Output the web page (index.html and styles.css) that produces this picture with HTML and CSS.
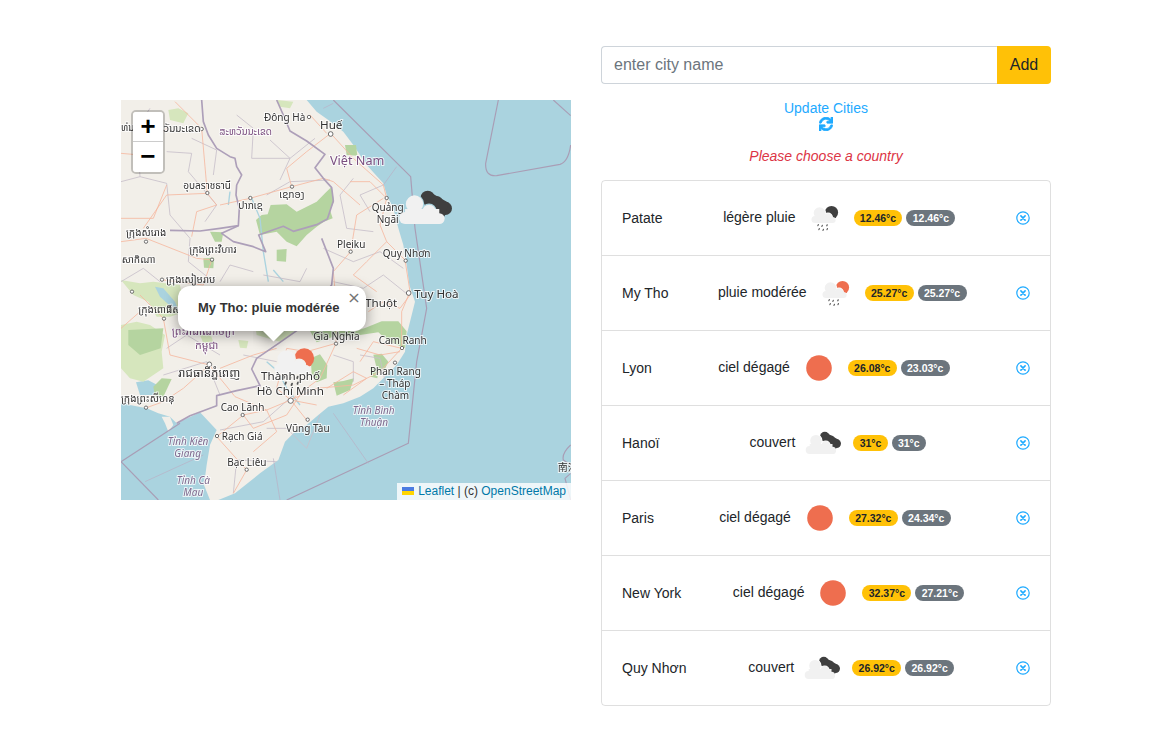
FILE: index.html
```html
<!DOCTYPE html>
<html lang="en">
<head>
	<meta charset="UTF-8">
	<title>Weather</title>
	<link rel="stylesheet" href="styles.css">
</head>
<body>

	<svg class="defs" width="0" height="0">
		<defs>
			<mask id="cutCloud" maskUnits="userSpaceOnUse" x="0" y="0" width="50" height="50">
				<rect width="50" height="50" fill="#fff"/>
				<g fill="#000" stroke="#000" stroke-width="1.4">
					<circle cx="17" cy="22.7" r="5.8"/><circle cx="26.7" cy="27.5" r="4.4"/>
				</g>
			</mask>
			<mask id="cutSmall" maskUnits="userSpaceOnUse" x="0" y="0" width="50" height="50">
				<rect width="50" height="50" fill="#fff"/>
				<g fill="#000" stroke="#000" stroke-width="1.4">
					<circle cx="19.5" cy="20" r="5.8"/><circle cx="28" cy="24.5" r="4.2"/>
				</g>
			</mask>
			<symbol id="clouds" viewBox="0 0 50 50">
				<g fill="#3f3f3f" mask="url(#cutCloud)">
					<circle cx="25.8" cy="18.6" r="4.8"/><circle cx="31.6" cy="22" r="4.6"/><circle cx="37.6" cy="25.6" r="4.4"/>
					<path d="M22 20l4-6 14 8-3 9-9-1z"/>
				</g>
				<g fill="#f1f1f1">
					<circle cx="17" cy="22.7" r="5.8"/><circle cx="26.7" cy="27.5" r="4.4"/>
					<circle cx="10.7" cy="32" r="4"/><circle cx="33.5" cy="32.4" r="3.6"/>
					<rect x="10.7" y="26" width="22.8" height="10"/>
				</g>
			</symbol>
			<g id="rainCloud">
				<g fill="#f1f1f1">
					<circle cx="19.5" cy="20" r="5.8"/><circle cx="28" cy="24.5" r="4.2"/>
					<circle cx="15" cy="26.5" r="3.5"/><circle cx="32.6" cy="27" r="3"/>
					<rect x="15" y="23" width="17.6" height="7"/>
				</g>
				<g stroke="#555" stroke-width="1.2" stroke-linecap="round">
					<path d="M18.3 31.6l-.4 1M22.3 32.4l-.4 1M27.2 31.8l-.4 1M19.3 35.6l-.4 1M23.4 36.4l-.4 1M27.4 35.6l-.4 1"/>
				</g>
			</g>
			<symbol id="rainDark" viewBox="0 0 50 50">
				<circle cx="31.5" cy="19.5" r="6.6" fill="#3f3f3f" mask="url(#cutSmall)"/>
				<use href="#rainCloud"/>
			</symbol>
			<symbol id="rainSun" viewBox="0 0 50 50">
				<circle cx="31.5" cy="19.5" r="6.6" fill="#ee6e4f" mask="url(#cutSmall)"/>
				<use href="#rainCloud"/>
			</symbol>
			<symbol id="sun" viewBox="0 0 50 50">
				<circle cx="25" cy="25" r="12.8" fill="#ee6e4f"/>
			</symbol>
			<symbol id="remove" viewBox="0 0 14 14">
				<circle cx="7" cy="7" r="6.2" fill="none" stroke="currentColor" stroke-width="1.2"/>
				<path d="M4.9 4.9l4.2 4.2M9.1 4.9l-4.2 4.2" stroke="currentColor" stroke-width="1.6" stroke-linecap="round"/>
			</symbol>
		</defs>
	</svg>

	<div class="page">

		<div class="map">
			<svg class="tiles" viewBox="3 15 1350 1200" width="450" height="400">
				<rect x="3" y="15" width="1350" height="1200" fill="#aad3df"/>

				<!-- land -->
				<path fill="#f2efe9" d="M3 15L560 15 590 50 625 75 670 110 700 150 740 210 790 265 800 300 820 340 835 400 850 450 860 510 868 570 885 620 870 680 860 720 855 770 830 810 790 850 760 880 720 905 670 925 625 935 595 960 560 990 530 1005 495 1040 475 1095 420 1135 345 1195 295 1215 270 1215 252 1170 260 1110 270 1050 290 1005 240 952 170 985 150 965 115 955 80 940 3 925Z"/>
				<path fill="#aad3df" d="M48 862L85 856 112 870 100 900 60 900Z"/>
				<path fill="#f2efe9" d="M125 965L150 965 160 990 145 1010 135 985Z"/>

				<!-- green -->
				<g fill="#d6e6bd">
					<path d="M3 690L50 680 90 690 135 720 125 770 130 820 70 860 30 850 3 820Z"/>
					<path d="M3 555L60 565 100 560 180 570 195 650 150 665 110 665 85 620 40 600Z"/>
					<path d="M145 45L175 40 205 55 190 85 150 75Z"/>
					<path d="M470 15L520 20 510 40 480 35Z"/>
					<path d="M400 660L470 650 540 700 480 740 410 720Z"/>
					<path d="M240 720L270 715 280 740 250 745Z"/>
					<path d="M355 735L385 738 380 760 360 758Z"/>
				</g>
				<g fill="#b5d4a0">
					<path d="M408 375L425 360 443 358 452 330 500 328 530 350 560 335 590 320 615 295 635 275 642 320 630 345 638 370 612 380 590 395 560 420 530 454 500 440 470 410 420 420Z"/>
					<path d="M570 708L640 690 705 709 735 699 785 679 835 679 860 709 855 759 805 739 775 712 705 722 640 725 590 742Z"/>
					<path d="M760 779L785 776 805 800 792 828 770 820Z"/>
					<path d="M750 814L775 820 772 850 752 845Z"/>
					<path d="M572 790L600 778 622 810 620 850 590 862 575 835Z"/>
					<path d="M640 862L670 858 702 850 690 885 650 902Z"/>
					<path d="M675 150L708 150 712 182 680 180Z"/>
					<path d="M25 705L130 700 122 760 60 780 25 750Z"/>
					<path d="M100 875L125 850 155 852 130 905 105 905Z"/>
					<path d="M470 464L500 462 498 500 470 498Z"/>
					<path d="M250 490L282 488 280 520 252 518Z"/>
					<path d="M270 410L310 412 305 440 285 440Z"/>
				</g>

				<!-- water -->
				<path fill="#aad3df" d="M105 575L130 580 165 620 176 648 150 632 120 605Z"/>
				<g fill="none" stroke="#aad3df" stroke-width="4">
					<path d="M395 310L420 370 430 470 445 560"/>
					<path d="M330 290L325 330"/>
					<path d="M460 525L490 560"/>
					<path d="M440 800L475 830 500 880 540 930"/>
				</g>

				<!-- small borders -->
				<g fill="none" stroke="#c8bfca" stroke-width="2.5">
					<path d="M3 260L60 245 140 265 150 360 210 430 205 500 280 560"/>
					<path d="M140 170L215 175 205 230 290 330 255 380"/>
					<path d="M215 130L290 165 280 240"/>
					<path d="M395 190L510 190 585 130"/>
					<path d="M440 300L510 260 630 255"/>
					<path d="M610 460L700 500 780 470 850 520"/>
					<path d="M640 560L730 580 790 540 865 600"/>
					<path d="M750 350L720 300 790 270"/>
					<path d="M440 1000L500 1000 560 1060 600 960"/>
					<path d="M300 1005L430 980 520 900"/>
					<path d="M720 780L780 790 800 880"/>
					<path d="M130 840L260 800 300 900"/>
					<path d="M3 560L70 520 120 560"/>
					<path d="M340 1195L350 1095 470 1100"/>
					<path d="M450 135L510 190 480 255"/>
					<path d="M60 245L50 100 90 40"/>
					<path d="M350 60L400 100 395 190"/>
					<path d="M700 250L660 300 680 400 760 410"/>
					<path d="M430 540L540 560 560 520"/>
					<path d="M300 560L330 510 400 530"/>
					<path d="M140 760L200 720 300 780"/>
					<path d="M370 780L470 800"/>
					<path d="M640 780L700 800 700 860"/>
				</g>

				<!-- roads -->
				<g fill="none" stroke="#f5b8a0" stroke-width="2.5">
					<path d="M632 115L700 190 790 270 800 310 780 390 800 440 855 495 870 590 845 650 845 760 780 830 700 870 590 880 512 915"/>
					<path d="M692 470L640 530 650 640 648 745 600 850 512 915"/>
					<path d="M692 470L710 360 790 310"/>
					<path d="M512 915L560 975"/>
					<path d="M512 915L440 945 370 960 290 1025 380 1125 340 1195"/>
					<path d="M268 810L345 905 440 945"/>
					<path d="M268 810L190 880 130 920 80 938"/>
					<path d="M268 810L150 780 130 670 60 600"/>
					<path d="M262 295L290 330 230 350 215 425"/>
					<path d="M262 295L140 300 70 400"/>
					<path d="M390 310L300 330"/>
					<path d="M262 295L245 100 165 20"/>
					<path d="M78 430L3 440"/>
					<path d="M78 430L230 490 275 495 250 570 130 555"/>
					<path d="M845 760L760 740 720 800"/>
					<path d="M570 60L620 115"/>
					<path d="M3 175L60 180 140 100"/>
					<path d="M3 370L100 370 140 270"/>
					<path d="M390 310L515 275 610 250 640 260"/>
					<path d="M370 960L400 1000 500 960 540 900"/>
					<path d="M440 945L470 1010 400 1070"/>
					<path d="M470 880L512 915 590 930"/>
					<path d="M620 880L700 830 740 850 670 900"/>
					<path d="M710 760L780 780 840 770"/>
					<path d="M745 650L790 620 840 640 870 600"/>
					<path d="M800 440L740 500 700 540 770 590"/>
					<path d="M648 745L560 770 500 760 470 880"/>
					<path d="M800 310L750 260 690 260"/>
					<path d="M515 275L500 220 560 170 632 115"/>
					<path d="M640 260L720 330"/>
					<path d="M300 820L400 780 470 760"/>
					<path d="M3 700L60 650"/>
				</g>

				<!-- country borders -->
				<g fill="none" stroke="#ad9fb9" stroke-width="5" stroke-linejoin="round">
					<path d="M245 15L250 80 265 120 290 160 330 185 345 190 350 215 365 240 350 270 348 300 358 340 355 392 300 400 240 408 150 406"/>
					<path d="M355 392L305 415 340 440 400 455 437 470 416 420 490 394 520 409 590 389 622 372 640 318 635 278 610 250 585 218 615 178 560 138 510 108 490 60 470 15"/>
					<path d="M605 430L640 520 635 570 600 610 540 700 480 742 410 790 395 822 420 872 350 887 290 902 290 932 210 962 170 985"/>
				</g>

				<!-- sea borders -->
				<g fill="none" stroke="#a99db5" stroke-width="3.5" stroke-linejoin="round">
					<path d="M640 15L872 245 885 400 920 640 890 800 865 1045 500 1215"/>
					<path d="M1135 15L1097 205Q1095 245 1130 242L1320 208Q1345 200 1352 150"/>
					<path d="M1300 15L1352 62"/>
					<path d="M3 1100L180 985"/>
					<path d="M3 1100L115 1215"/>
					<path d="M1352 1050Q1325 1075 1330 1095L1352 1110"/>
					<path d="M1352 1135L1335 1150 1352 1215"/>
				</g>
				<g fill="none" stroke="#b9afc4" stroke-width="2">
					<path d="M790 270L830 215"/>
					<path d="M640 955L745 1105"/>
					<path d="M610 40L640 25"/>
					<path d="M460 1090L480 1215"/>
					<path d="M75 1160L250 1080"/>
				</g>

				<!-- town dots -->
				<g fill="#fff" stroke="#555" stroke-width="2.5">
					<circle cx="567" cy="66" r="5"/><circle cx="632" cy="117" r="7"/><circle cx="245" cy="102" r="5"/>
					<circle cx="262" cy="294" r="5"/><circle cx="391" cy="309" r="5"/><circle cx="516" cy="275" r="5"/>
					<circle cx="800" cy="309" r="5"/><circle cx="78" cy="440" r="5"/><circle cx="276" cy="494" r="5"/>
					<circle cx="692" cy="470" r="5"/><circle cx="857" cy="497" r="5"/><circle cx="866" cy="594" r="7"/>
					<circle cx="126" cy="554" r="5"/><circle cx="36" cy="590" r="5"/><circle cx="132" cy="671" r="5"/>
					<circle cx="648" cy="746" r="5"/><circle cx="846" cy="759" r="5"/><circle cx="825" cy="803" r="5"/>
					<circle cx="268" cy="808" r="7"/><circle cx="78" cy="938" r="5"/><circle cx="512" cy="917" r="8"/>
					<circle cx="368" cy="960" r="5"/><circle cx="563" cy="974" r="5"/><circle cx="291" cy="1023" r="5"/>
					<circle cx="380" cy="1124" r="5"/>
				</g>

				<!-- labels -->
				<text class="lbl" x="432" y="78">Đông Hà</text>
				<text class="lbl big" x="600" y="101">Huế</text>
				<text class="lbl country" x="630" y="209">Việt Nam</text>
				<text class="lbl" x="651" y="458">Pleiku</text>
				<text class="lbl" x="788" y="487">Quy Nhơn</text>
				<text class="lbl" x="755" y="347">Quảng</text>
				<text class="lbl" x="770" y="383">Ngãi</text>
				<text class="lbl big" x="883" y="608">Tuy Hoà</text>
				<text class="lbl big" x="735" y="636">Thuột</text>
				<text class="lbl" x="580" y="734">Gia Nghĩa</text>
				<text class="lbl" x="776" y="746">Cam Ranh</text>
				<text class="lbl" x="750" y="840">Phan Rang</text>
				<text class="lbl" x="778" y="876">– Tháp</text>
				<text class="lbl" x="785" y="912">Chàm</text>
				<text class="lbl" x="302" y="948">Cao Lãnh</text>
				<text class="lbl" x="498" y="1011">Vũng Tàu</text>
				<text class="lbl" x="305" y="1034">Rạch Giá</text>
				<text class="lbl" x="322" y="1112">Bạc Liêu</text>
				<text class="lbl prov" x="698" y="956">Tỉnh Bình</text>
				<text class="lbl prov" x="720" y="993">Thuận</text>
				<text class="lbl prov" x="143" y="1049">Tỉnh Kiên</text>
				<text class="lbl prov" x="163" y="1086">Giang</text>
				<text class="lbl prov" x="170" y="1167">Tỉnh Cà</text>
				<text class="lbl prov" x="190" y="1204">Mau</text>
				<text class="lbl" x="1313" y="1128">南沙</text>
				<text class="lbl" x="18" y="422">ក្រុងសំរោង</text>
				<text class="lbl" x="208" y="475">ក្រុងព្រះវិហារ</text>
				<text class="lbl" x="5" y="505">សាកិណា</text>
				<text class="lbl" x="138" y="563">ក្រុងសៀមរាប</text>
				<text class="lbl" x="55" y="655">ក្រុងពោធិ៍សាត់</text>
				<text class="lbl land" x="155" y="720">ព្រះរាជាណាចក្រ</text>
				<text class="lbl land" x="225" y="762">កម្ពុជា</text>
				<text class="lbl big" x="175" y="845">រាជធានីភ្នំពេញ</text>
				<text class="lbl" x="3" y="920">ក្រុងព្រះសីហនុ</text>
				<text class="lbl" x="190" y="282">อุบลราชธานี</text>
				<text class="lbl" x="355" y="342">ປາກເຊ</text>
				<text class="lbl" x="478" y="308">ເຊກອງ</text>
				<text class="lbl land small" x="298" y="120">ສະຫວັນນະເຂດ</text>
				<text class="lbl" x="130" y="110">ວັນນະເຂດ</text>
				<text class="lbl" x="3" y="108">ທ່ນ</text>

				<!-- markers -->
				<use href="#clouds" x="807" y="225" width="225" height="225"/>
				<use href="#rainSun" x="411" y="702" width="225" height="225"/>
				<text class="lbl big" x="423" y="855">Thành phố</text>
				<text class="lbl big" x="410" y="901">Hồ Chí Minh</text>
			</svg>

			<div class="zoom-ctrl">
				<a class="zoom-btn">+</a>
				<a class="zoom-btn">−</a>
			</div>

			<div class="popup">
				<span class="popup-close">×</span>
				<div class="popup-text">My Tho: pluie modérée</div>
				<div class="popup-tip"><div class="popup-arrow"></div></div>
			</div>

			<div class="attribution">
				<svg class="flag" viewBox="0 0 12 8" width="12" height="8"><rect width="12" height="4" fill="#4c7be1"/><rect y="4" width="12" height="4" fill="#ffd500"/></svg>
				<a>Leaflet</a> | (c) <a>OpenStreetMap</a>
			</div>
		</div>

		<div class="side">
			<div class="add-form">
				<input class="city-input" type="text" placeholder="enter city name">
				<button class="add-btn">Add</button>
			</div>

			<div class="update">
				<span>Update Cities</span>
				<svg class="sync" viewBox="0 0 512 512" width="14" height="14"><path fill="currentColor" stroke="currentColor" stroke-width="30" d="M440.65 12.57l4 82.77A247.16 247.16 0 0 0 255.83 8C134.73 8 33.91 94.92 12.29 209.82A12 12 0 0 0 24.09 224h49.05a12 12 0 0 0 11.67-9.26 175.91 175.91 0 0 1 317-56.94l-101.46-4.86a12 12 0 0 0-12.57 12v47.41a12 12 0 0 0 12 12H500a12 12 0 0 0 12-12V12a12 12 0 0 0-12-12h-47.37a12 12 0 0 0-11.98 12.57zM255.83 432a175.61 175.61 0 0 1-146-77.8l101.8 4.87a12 12 0 0 0 12.57-12v-47.4a12 12 0 0 0-12-12H12a12 12 0 0 0-12 12V500a12 12 0 0 0 12 12h47.35a12 12 0 0 0 12-12.6l-4.15-82.57A247.17 247.17 0 0 0 255.83 504c121.11 0 221.93-86.92 243.55-201.82a12 12 0 0 0-11.8-14.18h-49.05a12 12 0 0 0-11.67 9.26A175.86 175.86 0 0 1 255.83 432z"/></svg>
			</div>

			<p class="error">Please choose a country</p>

			<ul class="cities">
				<li class="city">
					<span class="city-name">Patate</span>
					<div class="city-weather">
						<span class="desc">légère pluie</span>
						<svg class="icon"><use href="#rainDark"/></svg>
						<span class="badge max">12.46°c</span>
						<span class="badge min">12.46°c</span>
					</div>
					<svg class="remove"><use href="#remove"/></svg>
				</li>
				<li class="city">
					<span class="city-name">My Tho</span>
					<div class="city-weather">
						<span class="desc">pluie modérée</span>
						<svg class="icon"><use href="#rainSun"/></svg>
						<span class="badge max">25.27°c</span>
						<span class="badge min">25.27°c</span>
					</div>
					<svg class="remove"><use href="#remove"/></svg>
				</li>
				<li class="city">
					<span class="city-name">Lyon</span>
					<div class="city-weather">
						<span class="desc">ciel dégagé</span>
						<svg class="icon"><use href="#sun"/></svg>
						<span class="badge max">26.08°c</span>
						<span class="badge min">23.03°c</span>
					</div>
					<svg class="remove"><use href="#remove"/></svg>
				</li>
				<li class="city">
					<span class="city-name">Hanoï</span>
					<div class="city-weather">
						<span class="desc">couvert</span>
						<svg class="icon"><use href="#clouds"/></svg>
						<span class="badge max">31°c</span>
						<span class="badge min">31°c</span>
					</div>
					<svg class="remove"><use href="#remove"/></svg>
				</li>
				<li class="city">
					<span class="city-name">Paris</span>
					<div class="city-weather">
						<span class="desc">ciel dégagé</span>
						<svg class="icon"><use href="#sun"/></svg>
						<span class="badge max">27.32°c</span>
						<span class="badge min">24.34°c</span>
					</div>
					<svg class="remove"><use href="#remove"/></svg>
				</li>
				<li class="city">
					<span class="city-name">New York</span>
					<div class="city-weather">
						<span class="desc">ciel dégagé</span>
						<svg class="icon"><use href="#sun"/></svg>
						<span class="badge max">32.37°c</span>
						<span class="badge min">27.21°c</span>
					</div>
					<svg class="remove"><use href="#remove"/></svg>
				</li>
				<li class="city">
					<span class="city-name">Quy Nhơn</span>
					<div class="city-weather">
						<span class="desc">couvert</span>
						<svg class="icon"><use href="#clouds"/></svg>
						<span class="badge max">26.92°c</span>
						<span class="badge min">26.92°c</span>
					</div>
					<svg class="remove"><use href="#remove"/></svg>
				</li>
			</ul>
		</div>

	</div>

</body>
</html>
```

FILE: styles.css
```css
*{
	margin: 0;
	padding: 0;
	box-sizing: border-box;
}
ul{
	list-style-type: none;
}
body{
	font-family: "Liberation Sans", Arial, sans-serif;
	font-size: 14px;
	line-height: 21px;
	color: #212529;
	background: #fff;
}
.defs{
	position: absolute;
}
.page{
	display: flex;
	justify-content: center;
	align-items: flex-start;
	gap: 30px;
	padding: 46px 0 0 2px;
}

/* map */
.map{
	flex: none;
	width: 450px;
	height: 400px;
	margin-top: 54px;
	position: relative;
	overflow: hidden;
	background: #aad3df;
}
.tiles{
	display: block;
	filter: blur(.45px);
}
.lbl{
	font-family: "Noto Sans", "Noto Sans Khmer", "Noto Sans Lao", "Noto Sans Thai", "DejaVu Sans", "Noto Sans CJK SC", sans-serif;
	font-size: 30px;
	fill: #333;
	stroke: rgba(255,255,255,.75);
	stroke-width: 6px;
	paint-order: stroke;
}
.big{
	font-size: 35px;
}
.land{
	fill: #7b4f80;
	font-size: 32px;
}
.small{
	font-size: 29px;
}
.country{
	fill: #7b4f80;
	font-size: 38px;
}
.prov{
	fill: #7f6a8f;
	font-style: italic;
}
.zoom-ctrl{
	position: absolute;
	left: 10px;
	top: 10px;
	width: 34px;
	border: 2px solid rgba(0,0,0,.2);
	border-radius: 5px;
	background-clip: padding-box;
}
.zoom-btn{
	display: block;
	height: 30px;
	overflow: hidden;
	text-align: center;
	font: bold 26px/33px "Liberation Mono", monospace;
	color: #000;
	background: #fff;
	border-bottom: 1px solid #ccc;
	border-radius: 3px 3px 0 0;
}
.zoom-btn:last-child{
	border-bottom: none;
	border-radius: 0 0 3px 3px;
}
.popup{
	position: absolute;
	left: 57px;
	top: 186px;
	width: 188px;
	height: 45px;
	padding: 13px 20px;
	background: #fff;
	border-radius: 12px;
	box-shadow: 0 3px 14px rgba(0,0,0,.4);
}
.popup-text{
	font-size: 13px;
	font-weight: bold;
	line-height: 18px;
	color: #333;
	white-space: nowrap;
}
.popup-close{
	position: absolute;
	top: 0;
	right: 0;
	width: 24px;
	height: 24px;
	text-align: center;
	font: 16px/24px "DejaVu Sans", sans-serif;
	color: #757575;
}
.popup-tip{
	position: absolute;
	left: 75px;
	top: 45px;
	width: 40px;
	height: 20px;
	overflow: hidden;
}
.popup-arrow{
	width: 17px;
	height: 17px;
	margin: -10px auto 0;
	background: #fff;
	transform: rotate(45deg);
	box-shadow: 0 3px 14px rgba(0,0,0,.4);
}
.attribution{
	position: absolute;
	right: 0;
	bottom: 0;
	height: 17px;
	padding: 0 5px;
	font-size: 12px;
	line-height: 16px;
	color: #333;
	background: rgba(255,255,255,.8);
	white-space: nowrap;
}
.attribution a{
	color: #0078a8;
}
.flag{
	margin-right: 1px;
}

/* right side */
.side{
	flex: none;
	width: 450px;
}
.add-form{
	display: flex;
	height: 38px;
}
.city-input{
	flex: 1;
	min-width: 0;
	padding: 0 12px;
	font-family: inherit;
	font-size: 16px;
	color: #495057;
	border: 1px solid #ced4da;
	border-right: none;
	border-radius: 4px 0 0 4px;
}
.city-input::placeholder{
	color: #6c757d;
	opacity: 1;
}
.add-btn{
	width: 54px;
	font-family: inherit;
	font-size: 16px;
	color: #212529;
	background: #ffc107;
	border: none;
	border-radius: 0 4px 4px 0;
}
.update{
	display: flex;
	flex-direction: column;
	align-items: center;
	margin-top: 15px;
	color: #1eaaff;
	line-height: 18px;
}
.sync{
	display: block;
}
.error{
	margin: 15px 0 13px;
	text-align: center;
	font-style: italic;
	color: #dc3545;
}
.cities{
	border: 1px solid rgba(0,0,0,.125);
	border-radius: 4px;
}
.city{
	display: flex;
	justify-content: space-between;
	align-items: center;
	height: 74px;
	padding: 12px 20px;
}
.city + .city{
	height: 75px;
	border-top: 1px solid rgba(0,0,0,.125);
}
.city-weather{
	display: flex;
	align-items: center;
	gap: 4px;
}
.desc{
	margin-bottom: 2px;
}
.icon{
	display: block;
	width: 50px;
	height: 50px;
}
.badge{
	padding: 2.6px 6.3px;
	font-size: 10.5px;
	font-weight: bold;
	line-height: 1;
	border-radius: 10px;
	white-space: nowrap;
}
.max{
	color: #212529;
	background: #ffc107;
}
.min{
	color: #fff;
	background: #6c757d;
}
.remove{
	display: block;
	width: 14px;
	height: 14px;
	color: #1eaaff;
}
```
